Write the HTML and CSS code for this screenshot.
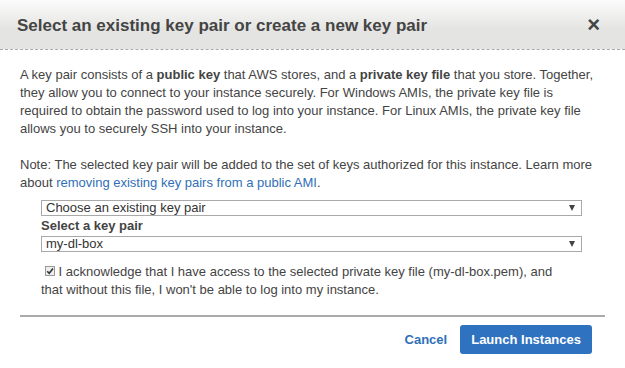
FILE: index.html
```html
<!DOCTYPE html>
<html lang="en">

<head>
  <meta charset="UTF-8">
  <meta name="viewport" content="width=device-width, initial-scale=1.0">
  <title>Select key pair</title>
  <link rel="stylesheet" href="styles.css">
</head>

<body>
  <div class="dialog">
    <!-- 标题栏 -->
    <div class="header">
      <h3>Select an existing key pair or create a new key pair</h3>
      <span class="close">&times;</span>
    </div>
    <div class="content">
      <p class="intro">A key pair consists of a <b>public key</b> that AWS stores, and a <b>private key file</b> that you store. Together, they allow you to connect to your instance securely. For Windows AMIs, the private key file is<br>required to obtain the password used to log into your instance. For Linux AMIs, the private key file allows you to securely SSH into your instance.</p>
      <p class="note">Note: The selected key pair will be added to the set of keys authorized for this instance. Learn more about <a href="#">removing existing key pairs from a public AMI</a>.</p>
      <div class="form">
        <div class="select">
          <span>Choose an existing key pair</span>
          <i class="arrow"></i>
        </div>
        <label class="label">Select a key pair</label>
        <div class="select">
          <span>my-dl-box</span>
          <i class="arrow"></i>
        </div>
        <p class="ack"><span class="check"><svg width="8" height="8" viewBox="0 0 8 8"><path d="M1.2 4.2 L3.2 6.2 L7 1.6" fill="none" stroke="#333" stroke-width="1.6"/></svg></span> I acknowledge that I have access to the selected private key file (my-dl-box.pem), and that without this file, I won't be able to log into my instance.</p>
      </div>
    </div>
    <div class="footer">
      <a href="#" class="cancel">Cancel</a>
      <button class="launch">Launch Instances</button>
    </div>
  </div>
</body>

</html>
```

FILE: styles.css
```css
body {
  margin: 0;
  padding: 0;
  background-color: #fff;
  font-family: "Liberation Sans", Arial, sans-serif;
  color: #444;
}

.header {
  height: 49px;
  display: flex;
  align-items: center;
  justify-content: space-between;
  padding: 0 25px 0 17px;
  background: linear-gradient(#fbfbfb, #e4e5e2 60%, #e4e5e2);
  border-bottom: 1px dashed #aaa;
}

.header h3 {
  margin: 0;
  font-size: 17px;
  font-weight: bold;
  color: #444;
  padding-top: 2px;
}

.close {
  font-size: 22px;
  font-weight: bold;
  color: #444;
  line-height: 1;
}

.content {
  padding: 16px 20px 0 20px;
  font-size: 13px;
  line-height: 18px;
}

.content p {
  margin: 0;
}

.intro {
  margin-bottom: 18px !important;
}

.note a {
  color: #2f6fb7;
  text-decoration: none;
}

.form {
  padding: 8px 23px 0 21px;
}

.select {
  height: 14px;
  border: 1px solid #a9a9a9;
  display: flex;
  align-items: center;
  justify-content: space-between;
  padding: 0 6px 0 4px;
  color: #333;
  font-size: 13px;
}

.arrow {
  width: 0;
  height: 0;
  border-left: 3px solid transparent;
  border-right: 3px solid transparent;
  border-top: 6px solid #444;
}

.label {
  display: block;
  font-weight: bold;
  line-height: 20px;
}

.ack {
  margin-top: 11px !important;
  padding-right: 12px;
}

.check {
  display: inline-block;
  width: 8px;
  height: 8px;
  margin-left: 4px;
  border: 1px solid #999;
  background: #eee;
  line-height: 0;
  vertical-align: middle;
  margin-top: -3px;
}

.footer {
  margin: 16px 20px 0 20px;
  border-top: 2px solid #aaa;
  display: flex;
  justify-content: flex-end;
  align-items: center;
  padding: 8px 13px 0 0;
  gap: 13px;
}

.cancel {
  color: #2f6fb7;
  font-weight: bold;
  font-size: 13px;
  text-decoration: none;
}

.launch {
  height: 29px;
  padding: 0 11px;
  border: none;
  border-radius: 3px;
  background-color: #2f72c0;
  color: #fff;
  font-family: "Liberation Sans", Arial, sans-serif;
  font-weight: bold;
  font-size: 13px;
}
```
